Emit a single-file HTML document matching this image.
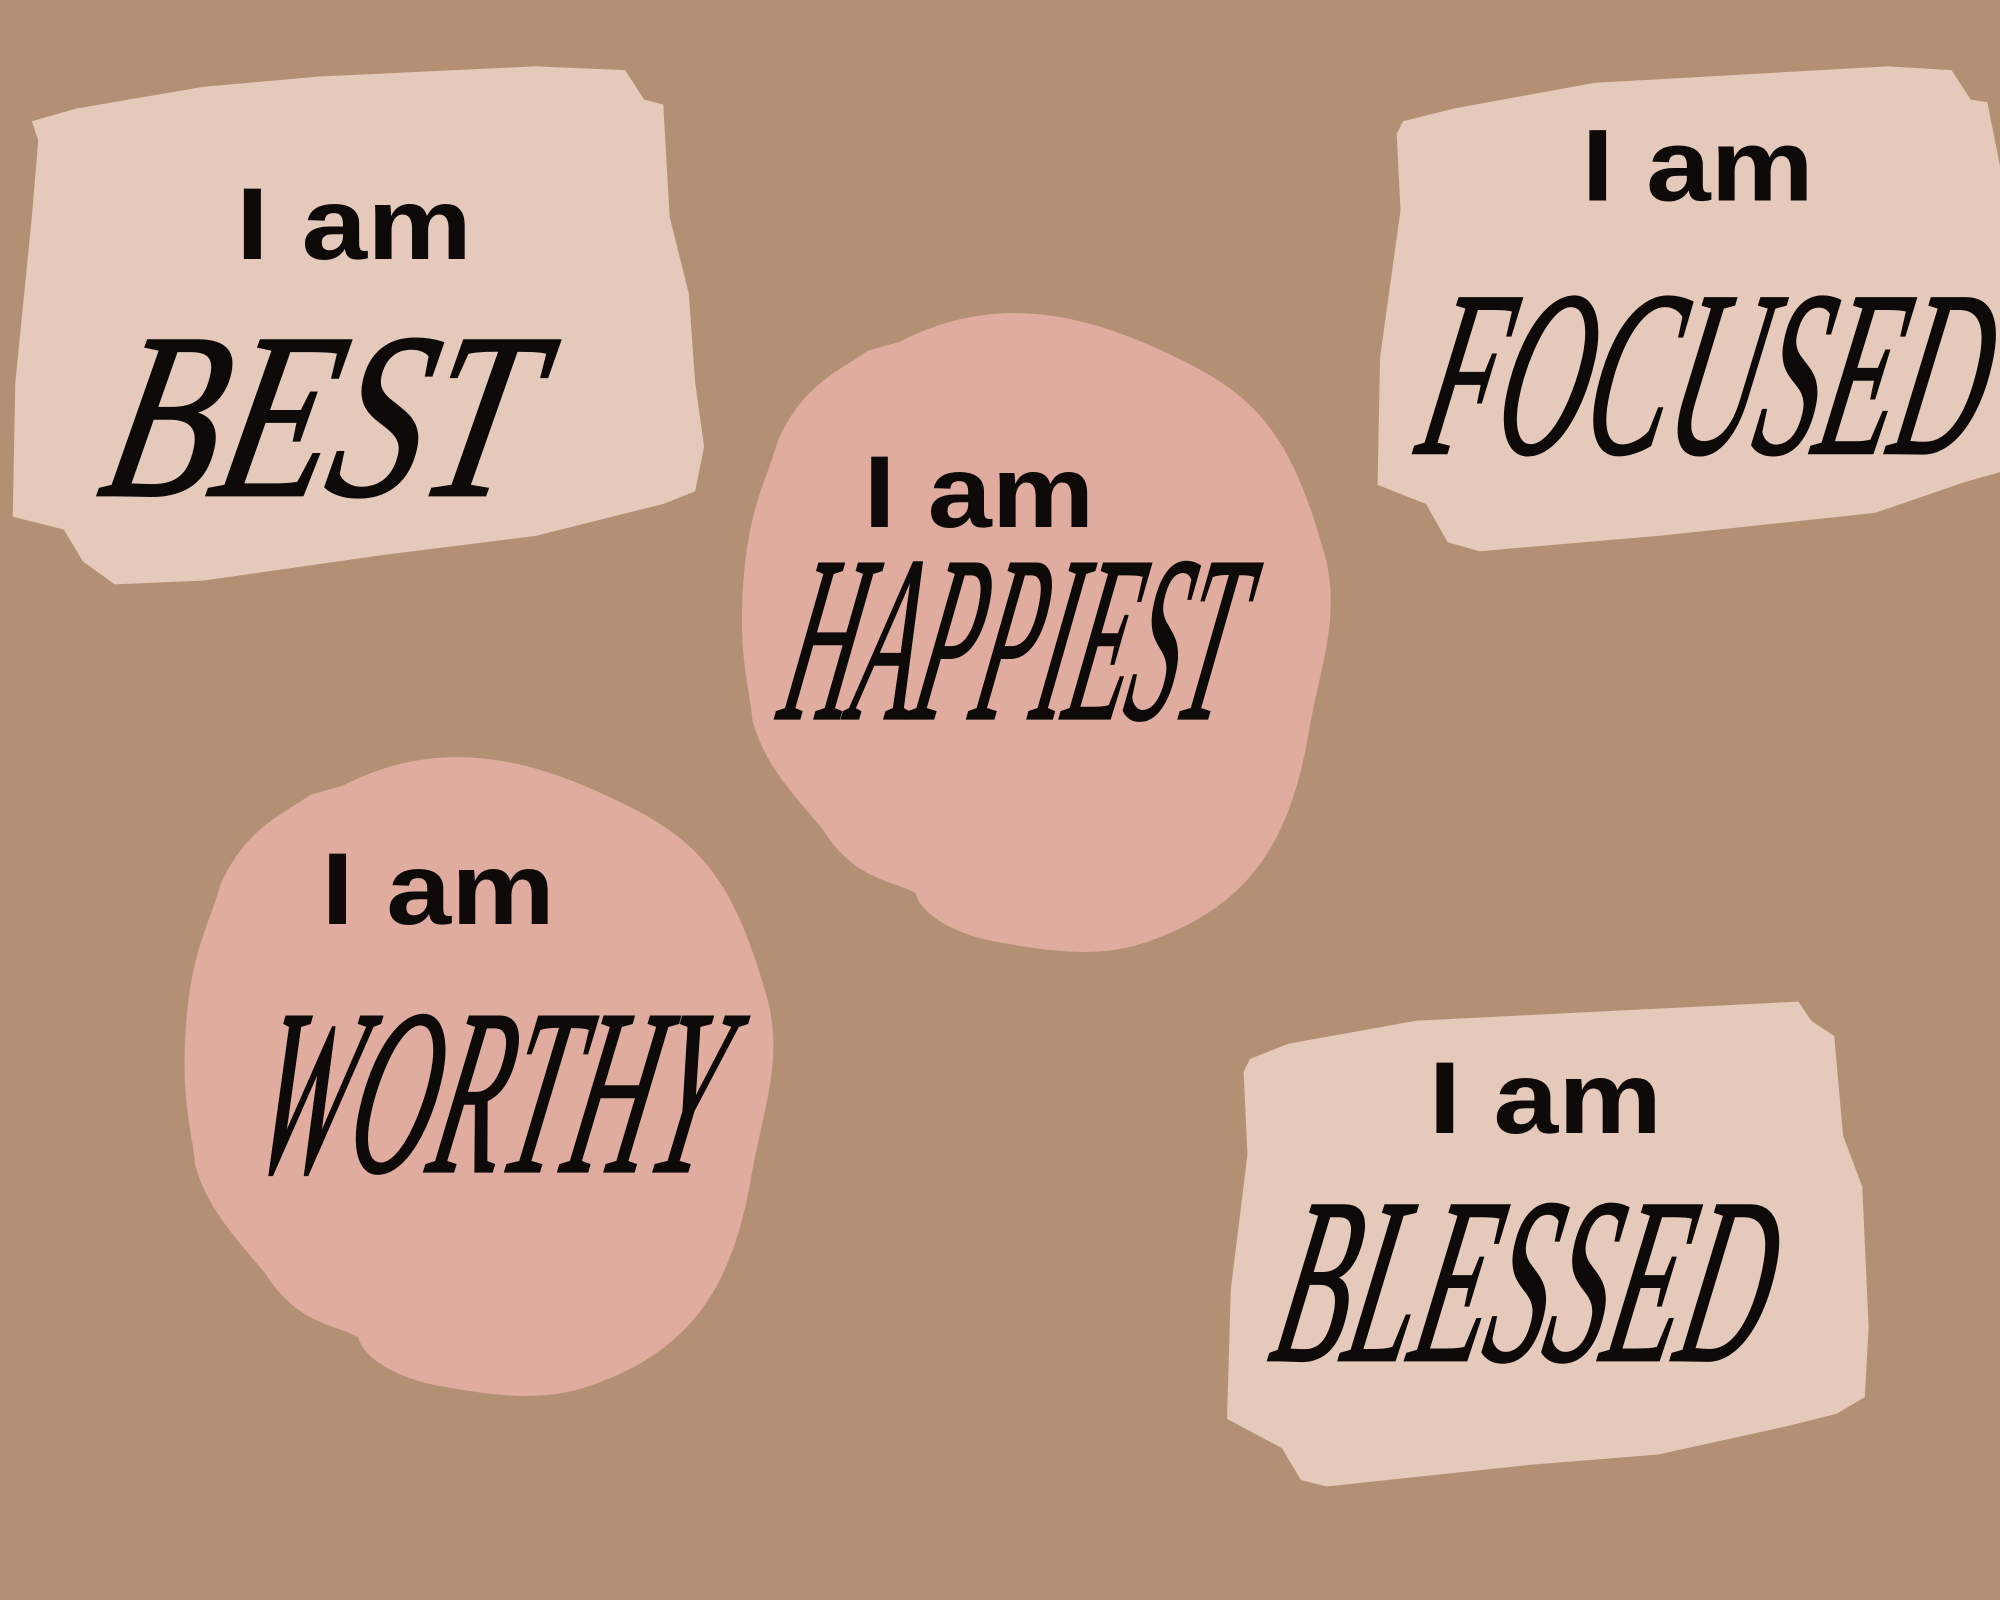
<!DOCTYPE html>
<html><head><meta charset="utf-8"><style>
html,body{margin:0;padding:0;background:#b39074;}
svg{display:block}
.ia{font-family:"Liberation Sans",sans-serif;font-weight:bold;font-size:80px;fill:#0d0a09}
.sc{font-family:"Liberation Serif",serif;font-style:italic;font-size:185px;fill:#0d0a09;stroke:#0d0a09;stroke-width:2}
</style></head><body>
<svg width="2000" height="1600" viewBox="0 0 1568 1254" preserveAspectRatio="none" xmlns="http://www.w3.org/2000/svg">
<rect width="1568" height="1254" fill="#b39074"/>
<polygon fill="#e5cabb" points="25,95 60,85 160,68 250,60 420,52 490,55 505,78 520,82 525,170 540,230 545,300 552,350 545,385 520,395 420,420 300,435 160,455 90,458 65,440 50,415 10,405 12,300 25,170 30,110"/>
<polygon fill="#e5cabb" points="1100,95 1140,85 1250,65 1480,52 1530,55 1545,78 1558,80 1568,130 1568,370 1540,378 1470,402 1300,420 1160,432 1135,425 1118,395 1080,380 1082,280 1098,165 1095,105"/>
<polygon fill="#e5cabb" points="980,830 1010,818 1110,800 1410,785 1420,800 1438,812 1445,890 1460,930 1465,1040 1462,1095 1440,1108 1400,1118 1300,1140 1200,1148 1040,1165 1020,1160 1005,1135 962,1112 965,1010 978,905 975,840"/>
<path id="blob" fill="#dfac9f" d="M705,268 C760,240 820,235 900,270 C980,305 1010,330 1040,440 C1050,490 1035,520 1025,580 C1010,660 980,710 900,738 C860,752 820,745 780,738 C740,730 720,712 718,700 C700,690 670,690 645,650 C620,620 600,600 590,565 C588,540 580,520 582,470 C585,400 600,380 610,345 C630,300 660,290 680,275 Z"/>
<use href="#blob" transform="translate(-437,348)"/>
<text class="ia" x="185" y="203" textLength="185" lengthAdjust="spacingAndGlyphs">I  am</text>
<text class="ia" x="1240" y="157" textLength="182" lengthAdjust="spacingAndGlyphs">I  am</text>
<text class="ia" x="677" y="413" textLength="181" lengthAdjust="spacingAndGlyphs">I  am</text>
<text class="ia" x="252" y="724" textLength="183" lengthAdjust="spacingAndGlyphs">I  am</text>
<text class="ia" x="1120" y="888" textLength="183" lengthAdjust="spacingAndGlyphs">I  am</text>
<g transform="translate(75,388) skewX(-12)"><text class="sc" x="0" y="0" textLength="330" lengthAdjust="spacingAndGlyphs">BEST</text></g>
<g transform="translate(1108,355) skewX(-12)"><text class="sc" x="0" y="0" textLength="440" lengthAdjust="spacingAndGlyphs" font-size="160">FOCUSED</text></g>
<g transform="translate(608,563) skewX(-12)"><text class="sc" x="0" y="0" textLength="352" lengthAdjust="spacingAndGlyphs" font-size="115">HAPPIEST</text></g>
<g transform="translate(192,918) skewX(-12)"><text class="sc" x="0" y="0" textLength="362" lengthAdjust="spacingAndGlyphs" font-size="150">WORTHY</text></g>
<g transform="translate(993,1066) skewX(-12)"><text class="sc" x="0" y="0" textLength="385" lengthAdjust="spacingAndGlyphs" font-size="140">BLESSED</text></g>
</svg>
</body></html>
